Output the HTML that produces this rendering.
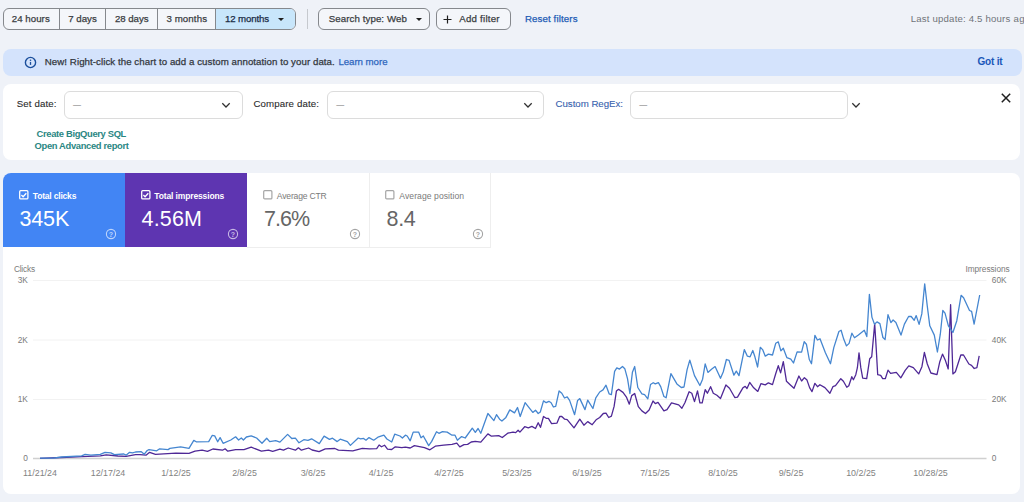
<!DOCTYPE html>
<html>
<head>
<meta charset="utf-8">
<title>Performance</title>
<style>
*{box-sizing:border-box;margin:0;padding:0}
html,body{width:1024px;height:502px;overflow:hidden}
body{background:#eff2f8;font-family:"Liberation Sans",Arial,sans-serif;color:#333;position:relative}
.abs{position:absolute}
.tx{position:absolute;white-space:nowrap}
.box{position:absolute;border:1px solid #85888d;border-radius:6px;background:#f4f6fa}
.sel{position:absolute;top:91px;height:28px;border:1px solid #dcdcdc;border-radius:6px;background:#fff}
.dash{position:absolute;top:104.2px;height:1px;background:#808080}
.card{position:absolute;background:#fff}
.caret{position:absolute;width:0;height:0;border-left:3px solid transparent;border-right:3px solid transparent;border-top:3.2px solid #1f1f1f}
</style>
</head>
<body>

<!-- top bar -->
<div class="box" style="left:3px;top:8px;width:293px;height:22px;overflow:hidden">
  <div class="abs" style="left:211px;top:0;width:81px;height:20px;background:#c8e6fb"></div>
  <div class="abs" style="left:55px;top:0;width:1px;height:20px;background:#85888d"></div>
  <div class="abs" style="left:101px;top:0;width:1px;height:20px;background:#85888d"></div>
  <div class="abs" style="left:153px;top:0;width:1px;height:20px;background:#85888d"></div>
  <div class="abs" style="left:211px;top:0;width:1px;height:20px;background:#85888d"></div>
</div>
<div class="caret" style="left:278.3px;top:18px"></div>
<div class="abs" style="left:307px;top:9px;width:1px;height:20px;background:#c6c9ce"></div>
<div class="box" style="left:318px;top:8px;width:112px;height:22px"></div>
<div class="caret" style="left:415.7px;top:18px"></div>
<div class="box" style="left:435.5px;top:8px;width:75.5px;height:22px"></div>
<svg class="abs" style="left:443px;top:15px" width="9" height="9" viewBox="0 0 9 9"><path d="M4.5 0.5v8M0.5 4.5h8" stroke="#1f1f1f" stroke-width="1.2" fill="none"/></svg>

<!-- info bar -->
<div class="abs" style="left:3px;top:49px;width:1019.4px;height:27px;background:#d4e3fc;border-radius:8px"></div>
<svg class="abs" style="left:23.6px;top:55.7px" width="13" height="13" viewBox="0 0 13 13"><circle cx="6.5" cy="6.5" r="5.1" fill="none" stroke="#1b4f9c" stroke-width="1.4"/><path d="M6.5 5.9v3" stroke="#1b4f9c" stroke-width="1.3"/><circle cx="6.5" cy="4.2" r="0.8" fill="#1b4f9c"/></svg>

<!-- filter card -->
<div class="card" style="left:3px;top:84px;width:1017.4px;height:76px;border-radius:8px"></div>
<div class="sel" style="left:64px;width:179px"></div>
<svg class="abs" style="left:221px;top:101.5px" width="10" height="7" viewBox="0 0 10 7"><path d="M1.3 1.3l3.7 3.7 3.7-3.7" fill="none" stroke="#303030" stroke-width="1.25"/></svg>
<div class="sel" style="left:327px;width:217px"></div>
<svg class="abs" style="left:523px;top:101.5px" width="10" height="7" viewBox="0 0 10 7"><path d="M1.3 1.3l3.7 3.7 3.7-3.7" fill="none" stroke="#303030" stroke-width="1.25"/></svg>
<div class="sel" style="left:630px;width:218px"></div>
<svg class="abs" style="left:851px;top:101.5px" width="10" height="7" viewBox="0 0 10 7"><path d="M1.3 1.3l3.7 3.7 3.7-3.7" fill="none" stroke="#303030" stroke-width="1.25"/></svg>
<svg class="abs" style="left:1001px;top:93px" width="10" height="10" viewBox="0 0 10 10"><path d="M0.8 0.8l8.4 8.4M9.2 0.8l-8.4 8.4" stroke="#1f1f1f" stroke-width="1.5" fill="none"/></svg>

<!-- main card -->
<div class="card" style="left:3px;top:173px;width:1017px;height:321px;border-radius:8px"></div>

<!-- tiles -->
<div class="abs" style="left:3px;top:173.4px;width:122px;height:74px;background:#4285f4;border-radius:8px 0 0 0"></div>
<div class="abs" style="left:125px;top:173.4px;width:122.3px;height:74px;background:#5e35b1"></div>
<div class="abs" style="left:247.3px;top:173.4px;width:122.5px;height:74.4px;border-right:1px solid #eeeeee;border-bottom:1px solid #eeeeee"></div>
<div class="abs" style="left:369.8px;top:173.4px;width:121.7px;height:74.4px;border-right:1px solid #eeeeee;border-bottom:1px solid #eeeeee"></div>
<svg class="abs" style="left:18.6px;top:190px" width="10" height="10" viewBox="0 0 10 10"><rect x="0.7" y="0.7" width="8.2" height="8.2" rx="1" fill="none" stroke="#fff" stroke-width="1.3"/><path d="M2.4 5l1.7 1.7L7.3 3.2" fill="none" stroke="#fff" stroke-width="1.3"/></svg>
<svg class="abs" style="left:140.8px;top:190px" width="10" height="10" viewBox="0 0 10 10"><rect x="0.7" y="0.7" width="8.2" height="8.2" rx="1" fill="none" stroke="#fff" stroke-width="1.3"/><path d="M2.4 5l1.7 1.7L7.3 3.2" fill="none" stroke="#fff" stroke-width="1.3"/></svg>
<svg class="abs" style="left:263.2px;top:190px" width="10" height="10" viewBox="0 0 10 10"><rect x="0.7" y="0.7" width="8.2" height="8.2" rx="1" fill="#fff" stroke="#a6a6a6" stroke-width="1.2"/></svg>
<svg class="abs" style="left:385.4px;top:190px" width="10" height="10" viewBox="0 0 10 10"><rect x="0.7" y="0.7" width="8.2" height="8.2" rx="1" fill="#fff" stroke="#a6a6a6" stroke-width="1.2"/></svg>
<svg class="abs" style="left:104.8px;top:227.7px" width="12" height="12" viewBox="0 0 12 12"><circle cx="6" cy="6" r="4.6" fill="none" stroke="rgba(255,255,255,0.65)" stroke-width="1.1"/><text x="6" y="8.5" text-anchor="middle" font-family="Liberation Sans, Arial, sans-serif" font-size="7" font-weight="bold" fill="rgba(255,255,255,0.65)">?</text></svg>
<svg class="abs" style="left:226.9px;top:227.7px" width="12" height="12" viewBox="0 0 12 12"><circle cx="6" cy="6" r="4.6" fill="none" stroke="rgba(255,255,255,0.65)" stroke-width="1.1"/><text x="6" y="8.5" text-anchor="middle" font-family="Liberation Sans, Arial, sans-serif" font-size="7" font-weight="bold" fill="rgba(255,255,255,0.65)">?</text></svg>
<svg class="abs" style="left:349.4px;top:227.7px" width="12" height="12" viewBox="0 0 12 12"><circle cx="6" cy="6" r="4.6" fill="none" stroke="#a3a3a3" stroke-width="1.1"/><text x="6" y="8.5" text-anchor="middle" font-family="Liberation Sans, Arial, sans-serif" font-size="7" font-weight="bold" fill="#a3a3a3">?</text></svg>
<svg class="abs" style="left:471.5px;top:227.7px" width="12" height="12" viewBox="0 0 12 12"><circle cx="6" cy="6" r="4.6" fill="none" stroke="#a3a3a3" stroke-width="1.1"/><text x="6" y="8.5" text-anchor="middle" font-family="Liberation Sans, Arial, sans-serif" font-size="7" font-weight="bold" fill="#a3a3a3">?</text></svg>

<!-- text -->
<div class="tx" style="left:11.7px;top:13.2px;font-size:9.7px;line-height:12px;font-weight:normal;color:#3a3d42;letter-spacing:0.050px;-webkit-text-stroke:0.25px #3a3d42;">24 hours</div>
<div class="tx" style="left:68.3px;top:13.2px;font-size:9.7px;line-height:12px;font-weight:normal;color:#3a3d42;letter-spacing:-0.024px;-webkit-text-stroke:0.25px #3a3d42;">7 days</div>
<div class="tx" style="left:114.9px;top:13.2px;font-size:9.7px;line-height:12px;font-weight:normal;color:#3a3d42;letter-spacing:-0.047px;-webkit-text-stroke:0.25px #3a3d42;">28 days</div>
<div class="tx" style="left:166.4px;top:13.2px;font-size:9.7px;line-height:12px;font-weight:normal;color:#3a3d42;letter-spacing:0.107px;-webkit-text-stroke:0.25px #3a3d42;">3 months</div>
<div class="tx" style="left:225.0px;top:13.2px;font-size:9.7px;line-height:12px;font-weight:normal;color:#1a2b45;letter-spacing:-0.137px;-webkit-text-stroke:0.25px #1a2b45;">12 months</div>
<div class="tx" style="left:328.8px;top:13.2px;font-size:9.7px;line-height:12px;font-weight:normal;color:#3a3d42;letter-spacing:0.080px;-webkit-text-stroke:0.25px #3a3d42;">Search type: Web</div>
<div class="tx" style="left:459.2px;top:13.2px;font-size:9.7px;line-height:12px;font-weight:normal;color:#3a3d42;letter-spacing:0.237px;-webkit-text-stroke:0.25px #3a3d42;">Add filter</div>
<div class="tx" style="left:524.9px;top:13.2px;font-size:9.7px;line-height:12px;font-weight:normal;color:#1d5bb5;letter-spacing:0.120px;-webkit-text-stroke:0.25px #1d5bb5;">Reset filters</div>
<div class="tx" style="left:910.8px;top:13.2px;font-size:9.6px;line-height:12px;font-weight:normal;color:#70747a;letter-spacing:0.190px;">Last update: 4.5 hours</div>
<div class="tx" style="left:1013.5px;top:13.2px;font-size:9.6px;line-height:12px;font-weight:normal;color:#70747a;letter-spacing:0.3px;">ago</div>
<div class="tx" style="left:44.8px;top:56.2px;font-size:9.7px;line-height:12px;font-weight:normal;color:#33373d;letter-spacing:0.061px;-webkit-text-stroke:0.25px #33373d;">New! Right-click the chart to add a custom annotation to your data.</div>
<div class="tx" style="left:338.4px;top:56.2px;font-size:9.7px;line-height:12px;font-weight:normal;color:#2f66bd;letter-spacing:-0.044px;-webkit-text-stroke:0.25px #2f66bd;">Learn more</div>
<div class="tx" style="left:977.5px;top:56.4px;font-size:10px;line-height:12px;font-weight:bold;color:#1a56b8;letter-spacing:-0.184px;">Got it</div>
<div class="tx" style="left:16.7px;top:97.9px;font-size:9.7px;line-height:12px;font-weight:normal;color:#2b2b2b;letter-spacing:0.114px;-webkit-text-stroke:0.1px #2b2b2b;">Set date:</div>
<div class="tx" style="left:253.5px;top:97.9px;font-size:9.7px;line-height:12px;font-weight:normal;color:#2b2b2b;letter-spacing:0.109px;-webkit-text-stroke:0.1px #2b2b2b;">Compare date:</div>
<div class="tx" style="left:555.5px;top:97.9px;font-size:9.7px;line-height:12px;font-weight:normal;color:#3b62ad;letter-spacing:-0.026px;-webkit-text-stroke:0.1px #2a5db0;">Custom RegEx:</div>
<div class="tx" style="left:73.0px;top:100.3px;font-size:8px;line-height:10px;font-weight:normal;color:#6a6a6a;">—</div>
<div class="tx" style="left:336.2px;top:100.3px;font-size:8px;line-height:10px;font-weight:normal;color:#6a6a6a;">—</div>
<div class="tx" style="left:639.2px;top:100.3px;font-size:8px;line-height:10px;font-weight:normal;color:#6a6a6a;">—</div>
<div class="tx" style="left:36.5px;top:128.1px;font-size:9.4px;line-height:12px;font-weight:bold;color:#2a8783;letter-spacing:-0.335px;">Create BigQuery SQL</div>
<div class="tx" style="left:34.6px;top:139.9px;font-size:9.4px;line-height:12px;font-weight:bold;color:#2a8783;letter-spacing:-0.338px;">Open Advanced report</div>
<div class="tx" style="left:32.8px;top:189.7px;font-size:8.5px;line-height:12px;font-weight:bold;color:#fff;letter-spacing:-0.189px;">Total clicks</div>
<div class="tx" style="left:19.5px;top:205.0px;font-size:21.5px;line-height:28px;font-weight:normal;color:#fff;letter-spacing:-0.153px;">345K</div>
<div class="tx" style="left:154.3px;top:189.7px;font-size:8.5px;line-height:12px;font-weight:bold;color:#fff;letter-spacing:-0.136px;">Total impressions</div>
<div class="tx" style="left:141.6px;top:205.0px;font-size:21.5px;line-height:28px;font-weight:normal;color:#fff;letter-spacing:0.149px;">4.56M</div>
<div class="tx" style="left:276.8px;top:189.5px;font-size:8.6px;line-height:12px;font-weight:normal;color:#7a7a7a;letter-spacing:-0.191px;">Average CTR</div>
<div class="tx" style="left:264.0px;top:205.0px;font-size:21.5px;line-height:28px;font-weight:normal;color:#666;letter-spacing:-0.951px;">7.6%</div>
<div class="tx" style="left:399.3px;top:189.5px;font-size:8.6px;line-height:12px;font-weight:normal;color:#7a7a7a;letter-spacing:0.065px;">Average position</div>
<div class="tx" style="left:386.6px;top:205.0px;font-size:21.5px;line-height:28px;font-weight:normal;color:#666;letter-spacing:-0.363px;">8.4</div>

<!-- chart -->
<svg id="chart" class="abs" style="left:0;top:250px" width="1024" height="252" viewBox="0 250 1024 252">
<line x1="33" x2="986.5" y1="280.5" y2="280.5" stroke="#f2f2f2" stroke-width="1"/>
<line x1="33" x2="986.5" y1="340" y2="340" stroke="#f2f2f2" stroke-width="1"/>
<line x1="33" x2="986.5" y1="399.5" y2="399.5" stroke="#f2f2f2" stroke-width="1"/>
<line x1="33" x2="986.5" y1="458.5" y2="458.5" stroke="#d0d0d0" stroke-width="1.4"/>
<polyline fill="none" stroke="#4f2896" stroke-width="1.3" stroke-linejoin="round" points="40.0,458.4 61.6,457.5 81.6,456.7 100.3,455.8 106.2,454.8 117.9,456.0 126.1,456.4 135.5,454.6 140.0,454.7 146.0,455.2 149.6,452.3 155.5,454.4 175.9,453.2 189.0,453.4 195.0,451.2 202.1,450.2 207.5,451.4 212.9,449.0 222.5,450.2 225.1,448.8 227.8,451.2 235.6,449.6 244.0,449.6 251.2,447.2 261.4,451.2 268.5,450.2 272.7,451.4 279.9,449.2 283.5,450.2 288.2,448.0 295.4,450.2 298.4,447.8 301.4,450.2 308.6,448.0 312.1,450.0 319.1,451.6 325.3,448.8 334.9,448.5 338.4,450.2 352.8,450.8 362.3,448.4 369.5,448.8 376.7,448.6 379.1,445.0 381.5,446.8 384.5,445.2 387.5,449.2 391.7,449.5 395.3,446.8 401.8,447.6 405.4,447.1 410.2,448.0 414.4,445.6 424.5,447.6 429.9,449.8 435.3,446.2 443.7,445.2 452.0,444.4 456.8,443.2 459.8,446.8 464.0,444.7 467.6,444.4 471.2,442.0 475.3,441.4 480.8,442.2 487.9,433.9 491.5,436.2 498.7,435.7 502.3,437.5 507.7,433.2 513.0,432.1 515.7,432.6 518.1,430.3 519.9,432.1 524.7,426.7 528.3,427.8 531.9,426.4 535.5,428.5 538.2,422.8 540.5,427.3 543.5,416.5 546.2,418.3 548.4,418.3 551.6,423.7 557.0,423.1 559.7,416.5 561.8,416.5 564.7,419.2 567.2,419.6 574.0,427.8 579.8,419.2 583.9,425.2 587.7,421.6 592.2,424.7 596.1,419.8 599.7,417.5 603.3,413.5 606.0,413.2 608.7,417.5 611.4,416.2 614.1,406.4 616.4,391.1 618.6,389.3 623.0,392.4 626.6,397.4 629.3,404.2 631.7,395.6 634.7,393.5 638.3,406.7 641.9,410.9 645.5,413.5 649.1,410.0 653.0,401.0 655.3,403.7 658.0,402.4 663.9,410.9 667.0,409.6 671.5,402.8 678.7,404.9 681.9,408.2 684.9,402.8 689.1,391.7 691.8,393.2 694.5,401.6 697.5,390.9 699.9,402.9 702.2,402.9 705.2,389.6 707.4,393.2 710.6,386.7 713.3,393.2 716.9,395.3 720.5,398.6 725.9,384.9 729.5,388.2 734.8,397.5 737.5,397.1 742.9,387.8 745.2,386.4 747.0,388.5 749.7,382.4 753.7,387.8 757.8,391.4 760.9,383.7 765.3,384.9 768.4,382.8 772.5,384.6 775.7,373.8 778.3,365.7 780.6,372.9 783.3,361.6 786.5,381.3 790.4,384.9 794.0,388.2 798.9,376.0 801.6,381.0 804.4,377.7 807.0,380.1 809.6,387.6 812.0,391.6 814.9,383.3 817.5,386.7 819.9,384.7 824.9,387.6 829.9,393.2 832.9,386.7 835.5,385.7 840.8,378.7 843.4,381.3 846.8,387.3 848.8,385.7 851.8,376.7 853.4,379.7 855.8,374.7 857.4,367.7 859.0,352.8 860.8,367.7 862.7,378.1 866.7,378.7 869.7,358.8 871.7,356.8 874.7,323.9 876.3,349.8 877.7,374.7 880.7,375.3 882.7,378.7 885.3,378.7 888.0,370.1 890.6,373.3 896.3,372.4 900.8,377.8 905.2,370.3 908.8,365.8 913.3,367.6 918.7,373.9 921.9,366.7 924.4,352.3 927.3,364.0 930.9,373.0 937.0,374.7 939.8,361.7 942.5,354.1 945.2,359.9 948.2,369.0 950.6,304.7 952.9,373.9 955.4,371.7 960.8,355.0 963.5,355.0 968.9,364.0 971.5,365.3 974.2,368.5 976.9,367.6 979.2,355.9"/>
<polyline fill="none" stroke="#4586d0" stroke-width="1.3" stroke-linejoin="round" points="40.0,458.1 53.4,458.1 61.6,457.0 81.6,455.8 85.1,454.4 90.9,455.2 100.3,454.4 105.0,452.3 110.9,452.9 114.4,454.6 123.8,454.0 126.1,455.2 129.6,452.3 132.5,452.9 135.5,452.0 141.3,451.7 144.3,454.2 147.2,450.5 149.0,449.6 156.7,450.8 159.7,448.8 168.1,449.6 169.9,448.4 180.6,446.9 189.0,448.4 193.8,440.4 196.2,441.8 208.7,441.6 212.3,435.3 214.7,435.9 217.7,441.8 220.1,437.6 223.1,443.3 230.8,440.0 235.6,436.8 238.6,440.0 241.3,438.0 243.4,440.0 246.4,437.0 251.2,435.9 256.6,438.0 262.0,443.3 266.7,438.2 269.7,441.6 275.7,440.6 279.9,442.1 287.6,434.4 291.8,438.5 295.4,438.2 299.0,442.8 303.8,439.7 308.0,440.4 311.6,438.8 319.3,443.6 324.1,436.1 329.5,439.4 332.5,438.2 337.2,441.6 340.2,439.2 347.4,441.6 350.4,445.4 358.2,438.0 360.6,438.8 363.6,438.4 366.0,440.2 369.0,437.6 373.7,440.2 377.9,437.2 383.9,435.2 386.9,439.0 391.7,442.0 394.7,434.2 400.0,436.0 402.4,438.0 405.4,435.2 407.2,436.0 410.2,440.8 413.2,432.1 418.6,432.1 421.0,437.8 423.3,436.0 428.7,445.6 431.7,441.4 436.5,431.8 438.9,433.3 442.5,431.6 447.2,432.1 452.0,435.2 455.0,435.2 457.4,440.2 461.6,436.6 465.2,438.0 472.3,428.2 475.3,432.4 478.1,428.5 480.8,433.2 487.9,413.5 493.9,420.6 496.5,414.7 499.6,419.2 501.9,421.0 505.9,417.4 509.8,409.9 514.5,412.9 517.5,407.5 520.2,416.5 525.1,402.7 532.8,412.4 535.5,410.2 538.2,413.5 540.3,412.0 543.5,400.9 546.2,402.7 548.9,401.3 551.1,402.7 553.4,407.0 555.7,406.3 559.1,390.9 561.8,393.2 564.5,398.0 567.2,396.8 569.6,400.4 574.6,414.7 577.6,400.4 579.8,398.6 585.0,409.6 587.7,400.1 592.9,408.5 595.8,397.8 599.7,392.0 603.0,389.9 606.0,385.2 609.1,393.8 611.4,394.7 614.6,371.4 616.8,367.8 619.5,369.1 622.5,366.5 624.8,368.7 627.5,378.6 629.9,393.5 632.4,372.3 634.7,366.5 637.8,387.5 641.9,393.8 644.6,394.7 647.8,398.8 650.5,384.5 653.2,382.7 655.3,383.9 658.4,382.7 660.7,386.6 663.9,396.5 666.1,397.8 670.9,373.7 676.9,383.9 681.3,387.5 684.0,387.0 687.1,369.6 689.8,360.1 694.5,375.6 699.9,385.5 702.6,379.2 705.2,363.9 707.9,372.4 711.5,369.3 715.1,366.6 720.5,378.3 723.2,372.0 726.4,359.5 729.1,360.4 733.9,375.2 736.3,371.1 739.0,375.6 744.3,349.6 747.4,356.2 750.1,356.8 752.8,350.5 754.9,356.8 757.6,367.0 760.3,347.3 762.6,349.6 765.3,356.2 768.4,354.1 772.5,355.0 775.7,343.3 778.3,341.9 780.9,350.9 783.3,348.3 786.9,357.7 790.8,359.1 793.5,363.0 797.1,351.9 801.6,352.2 804.2,341.7 806.4,344.2 809.3,359.5 811.5,363.7 814.9,335.4 817.4,340.0 820.0,338.8 825.4,352.7 830.5,363.7 833.8,347.6 838.9,331.5 841.1,330.3 843.7,339.1 846.5,345.9 849.1,343.4 851.9,333.2 854.5,337.8 858.4,334.9 864.3,330.3 866.8,336.6 869.4,294.3 871.9,317.1 874.5,324.3 877.0,321.9 879.9,323.6 882.9,337.5 885.1,339.5 888.0,314.6 890.9,322.6 893.1,320.0 895.9,322.4 901.0,335.1 904.4,324.1 908.6,316.5 911.2,316.5 914.2,320.3 916.2,315.6 919.1,324.4 921.8,313.9 924.7,283.8 927.2,305.5 929.8,325.8 934.3,335.1 937.4,352.0 940.3,334.2 942.8,310.5 945.0,313.1 948.4,325.8 952.9,332.5 956.8,320.7 961.1,295.3 963.6,297.8 969.5,310.5 971.6,311.4 974.1,324.1 979.7,295.0"/>
<g font-family="Liberation Sans, Arial, sans-serif" font-size="8.3" fill="#7a7a7a">
<text x="27.8" y="283.3" text-anchor="end">3K</text>
<text x="27.8" y="342.8" text-anchor="end">2K</text>
<text x="27.8" y="402.3" text-anchor="end">1K</text>
<text x="27.8" y="461.3" text-anchor="end">0</text>
<text x="991.8" y="283.3">60K</text>
<text x="991.8" y="342.8">40K</text>
<text x="991.8" y="402.3">20K</text>
<text x="991.8" y="461.3">0</text>
<text x="13.9" y="272" textLength="21.2">Clicks</text>
<text x="965.4" y="272" textLength="44.3">Impressions</text>
<text x="40.0" y="476" font-size="8.9" fill="#828282" text-anchor="middle">11/21/24</text>
<text x="108.0" y="476" font-size="8.9" fill="#828282" text-anchor="middle">12/17/24</text>
<text x="176.0" y="476" font-size="8.9" fill="#828282" text-anchor="middle">1/12/25</text>
<text x="244.5" y="476" font-size="8.9" fill="#828282" text-anchor="middle">2/8/25</text>
<text x="313.0" y="476" font-size="8.9" fill="#828282" text-anchor="middle">3/6/25</text>
<text x="381.0" y="476" font-size="8.9" fill="#828282" text-anchor="middle">4/1/25</text>
<text x="449.0" y="476" font-size="8.9" fill="#828282" text-anchor="middle">4/27/25</text>
<text x="517.0" y="476" font-size="8.9" fill="#828282" text-anchor="middle">5/23/25</text>
<text x="587.0" y="476" font-size="8.9" fill="#828282" text-anchor="middle">6/19/25</text>
<text x="655.0" y="476" font-size="8.9" fill="#828282" text-anchor="middle">7/15/25</text>
<text x="723.0" y="476" font-size="8.9" fill="#828282" text-anchor="middle">8/10/25</text>
<text x="791.0" y="476" font-size="8.9" fill="#828282" text-anchor="middle">9/5/25</text>
<text x="861.0" y="476" font-size="8.9" fill="#828282" text-anchor="middle">10/2/25</text>
<text x="930.5" y="476" font-size="8.9" fill="#828282" text-anchor="middle">10/28/25</text>
</g>
</svg>

</body>
</html>
